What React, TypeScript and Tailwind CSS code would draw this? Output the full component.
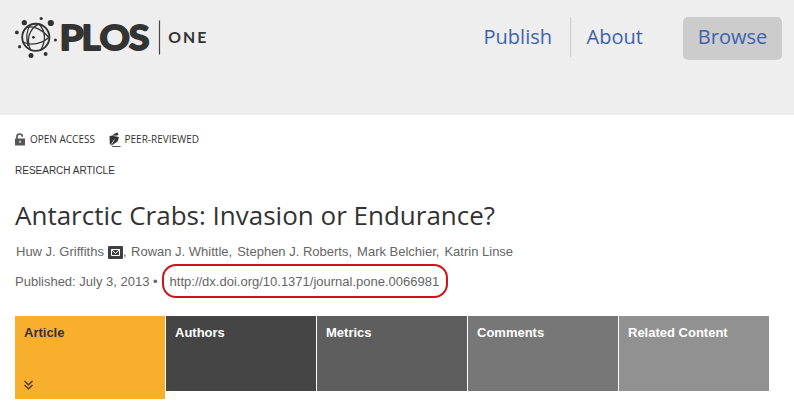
import React from "react";

const tabs = [
  { label: "Authors", color: "bg-[#454545]" },
  { label: "Metrics", color: "bg-[#5e5e5e]" },
  { label: "Comments", color: "bg-[#777777]" },
  { label: "Related Content", color: "bg-[#919191]" },
];

function Logo() {
  return (
    <svg width="200" height="48" viewBox="10 12 200 48" className="ml-[10px] mt-3 shrink-0" fill="none">
      <g stroke="#333" strokeWidth="1.3">
        <circle cx="35.8" cy="37.3" r="13.6" strokeWidth="1.9" />
        <path d="M38.5 24.2C29 29 26 40 30.5 50M27 27.5C34 25 44 31 49 37.5M22.8 42C31 46 42 44 49.2 37M30 25C26.5 31 26 38 28 46M39 24.2C46 31 46 42 40.5 50" />
      </g>
      <g fill="#333">
        <circle cx="33.4" cy="37.3" r="1.4" />
        <circle cx="24.3" cy="22.7" r="2.6" />
        <circle cx="41.2" cy="18.5" r="1.6" />
        <circle cx="50.8" cy="23" r="3.1" />
        <circle cx="16.9" cy="32.4" r="1.9" />
        <circle cx="19.6" cy="46.7" r="1.6" />
        <circle cx="31" cy="55.6" r="2.5" />
        <circle cx="45.6" cy="53.9" r="2" />
        <circle cx="55.4" cy="40" r="1.5" />
      </g>
      <g fill="#333" stroke="#333" strokeWidth="1.8" strokeLinejoin="round" className="font-['Lato',sans-serif] text-[35px] font-bold">
        <text x="59.5" y="50.1" textLength="24" lengthAdjust="spacingAndGlyphs">P</text>
        <text x="81.6" y="50.1" textLength="19" lengthAdjust="spacingAndGlyphs">L</text>
        <text x="99.4" y="50.1" textLength="30.4" lengthAdjust="spacingAndGlyphs">O</text>
        <text x="128.8" y="50.1" textLength="20.8" lengthAdjust="spacingAndGlyphs">S</text>
      </g>
      <path d="M159.5 20.5V54.5" stroke="#444" strokeWidth="1.2" />
      <text x="168.3" y="43.2" textLength="38" fill="#333" className="font-['Lato',sans-serif] text-[15.8px] font-bold">ONE</text>
    </svg>
  );
}

function LockIcon() {
  return (
    <svg width="10" height="13" viewBox="0 0 10 13" fill="none" className="shrink-0">
      <path d="M2 6V3.4Q2 1 4.8 1Q7.4 1 7.4 3.8" stroke="#555" strokeWidth="1.7" />
      <path d="M0 5.5H10V12Q10 12.5 9.5 12.5H.5Q0 12.5 0 12Z" fill="#555" />
      <path d="M4.3 7.6H5.7V10H4.3Z" fill="#ddd" />
    </svg>
  );
}

function PenIcon() {
  return (
    <svg width="12" height="16" viewBox="0 0 12 16" fill="none" className="mt-0.5 shrink-0">
      <path d="M4.2 2.2L8.6 .5L9.5 3L6 4Z" fill="#333" />
      <path d="M.5 4.2L4.5 3L10 5.2L8.6 9.5L2.5 13.4L.8 12Z" fill="#333" />
      <path d="M2 12.8L5.5 7.5" stroke="#fff" strokeWidth=".8" />
      <path d="M4.5 3.6L9.5 4.7" stroke="#ccc" strokeWidth=".8" />
      <path d="M3 14.5H11.5" stroke="#555" strokeWidth="1" />
    </svg>
  );
}

function MailIcon() {
  return (
    <svg width="15" height="13" viewBox="0 0 15 13" className="mt-px shrink-0" fill="none">
      <rect width="15" height="13" rx="1" fill="#404040" />
      <path d="M3.5 3.5H11.5V9.5H3.5ZM3.5 3.5L7.5 7.5L11.5 3.5" stroke="#fff" />
    </svg>
  );
}

export default function App() {
  return (
    <div className="h-[410px] w-[794px] overflow-hidden bg-white font-['Liberation_Sans',Arial,sans-serif]">
      <header className="flex h-[115px] items-start bg-[#eeeeee]">
        <Logo />
        <nav className="ml-auto mr-3 mt-[17px] flex font-['Open_Sans',sans-serif] text-[20px] leading-10 text-[#3c63af]">
          <a className="h-10 border-r border-[#cccccc] pr-[18px]">Publish</a>
          <a className="w-[112px] pl-[15.5px]">About</a>
          <a className="h-[43px] w-[99px] rounded-[5px] bg-[#cccccc] text-center">Browse</a>
        </nav>
      </header>

      <main className="px-[15px]">
        <div className="mt-4 flex h-4 items-center font-['Open_Sans',sans-serif] text-[10px] leading-4 text-[#333]">
          <LockIcon />
          <span className="ml-[5px] w-[79px] whitespace-nowrap">OPEN ACCESS</span>
          <PenIcon />
          <span className="ml-[3.5px] whitespace-nowrap">PEER-REVIEWED</span>
        </div>
        <p className="mt-4 text-[10px] leading-4 text-[#333]">RESEARCH ARTICLE</p>
        <h1 className="mt-[18px] whitespace-nowrap font-['Open_Sans',sans-serif] text-[26px] leading-9 text-[#333]">
          Antarctic Crabs: Invasion or Endurance?
        </h1>
        <div className="ml-px mt-[11px] flex h-4 items-center gap-[5px] whitespace-nowrap text-[13px] leading-4 text-[#666]">
          <span className="flex items-center">
            <span className="mr-1">Huw J. Griffiths</span>
            <MailIcon />,
          </span>
          <span className="-ml-[0.5px]">Rowan J. Whittle,</span>
          <span>Stephen J. Roberts,</span>
          <span>Mark Belchier,</span>
          <span>Katrin Linse</span>
        </div>
        <div className="mt-1 flex h-[34px] items-center whitespace-nowrap text-[13px] text-[#666]">
          <span className="pt-0.5">Published: July 3, 2013 •</span>
          <a className="ml-1 flex h-[34px] w-[286px] items-center rounded-[14px] border-2 border-[#d01219] pl-[6px] pt-0.5">
            http://dx.doi.org/10.1371/journal.pone.0066981
          </a>
        </div>
        <div className="mt-[18px] flex items-start gap-px text-[13px] font-bold leading-4 text-white">
          <div className="flex h-[83px] w-[150px] flex-col justify-between bg-[#f8af2d] px-[9px] pb-[9px] pt-[9px] text-[#333]">
            Article
            <svg width="9" height="10" viewBox="0 0 9 10" fill="none" stroke="#4b3b1b" strokeWidth="1.4">
              <path d="M.5 1L4.5 4.7L8.5 1M.5 5L4.5 8.7L8.5 5" />
            </svg>
          </div>
          {tabs.map((tab) => (
            <div key={tab.label} className={`h-[75px] w-[150px] px-[9px] pt-[9px] ${tab.color}`}>
              {tab.label}
            </div>
          ))}
        </div>
      </main>
    </div>
  );
}
